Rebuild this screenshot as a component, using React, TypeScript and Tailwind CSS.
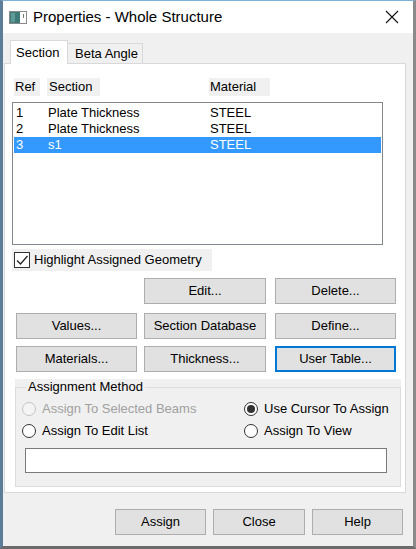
import React from "react";

const rows = [
  { ref: "1", section: "Plate Thickness", material: "STEEL" },
  { ref: "2", section: "Plate Thickness", material: "STEEL" },
  { ref: "3", section: "s1", material: "STEEL" },
];

const Btn = ({
  label,
  w = "w-[121px]",
  focused = false,
}: {
  label: string;
  w?: string;
  focused?: boolean;
}) => (
  <div
    className={`${w} h-[26px] flex items-center justify-center bg-[#e1e1e1] text-[13px] text-black ${
      focused ? "border-2 border-[#0078d7]" : "border border-[#adadad]"
    }`}
  >
    {label}
  </div>
);

const Radio = ({
  label,
  checked = false,
  disabled = false,
}: {
  label: string;
  checked?: boolean;
  disabled?: boolean;
}) => (
  <div className="flex items-center h-[16px]">
    <div
      className={`w-[14px] h-[14px] rounded-full border flex items-center justify-center ${
        disabled ? "border-[#c4c4c4] bg-[#f4f4f4]" : "border-[#333333] bg-white"
      }`}
    >
      {checked && <div className="w-[8px] h-[8px] rounded-full bg-[#333333]" />}
    </div>
    <span
      className={`ml-[6px] text-[13px] ${disabled ? "text-[#a0a0a0]" : "text-black"}`}
    >
      {label}
    </span>
  </div>
);

const App = () => {
  return (
    <div className="w-[416px] h-[549px] flex flex-col bg-[#f0f0f0] border-t border-t-[#7fb0d8] border-l-[3px] border-l-[#5d7c98] border-r-[3px] border-r-[#8a8a8a] border-b-[3px] border-b-[#6b6b6b] font-['Liberation_Sans',Arial,sans-serif] text-black leading-[16px]">
      {/* title bar */}
      <div className="h-[32px] bg-white flex items-center shrink-0">
        <svg className="ml-[6px]" width="18" height="13" viewBox="0 0 18 13">
          <rect x="0.5" y="0.5" width="17" height="12" fill="#ffffff" stroke="#8a8a8a" />
          <rect x="1" y="1" width="10" height="11" fill="#3e7a78" />
          <rect x="2" y="2" width="4" height="9" fill="#5f9c98" />
          <rect x="14" y="3" width="1" height="4" fill="#7a7a7a" />
        </svg>
        <span className="ml-[6px] text-[15px] leading-[20px] text-black">
          Properties - Whole Structure
        </span>
        <svg className="ml-auto mr-[14px]" width="14" height="14" viewBox="0 0 14 14">
          <path d="M1 1 L13 13 M13 1 L1 13" stroke="#111111" strokeWidth="1.1" />
        </svg>
      </div>

      {/* body */}
      <div className="flex flex-col pt-[7px]">
        {/* tabs */}
        <div className="flex items-end h-[24px] ml-[7px]">
          <div className="relative z-10 h-[24px] w-[58px] bg-white border border-[#d9d9d9] border-b-0 flex items-center pl-[5px] text-[13px]">
            Section
          </div>
          <div className="h-[21px] w-[75px] bg-[#f0f0f0] border border-[#d9d9d9] border-l-0 border-b-0 flex items-center pl-[7px] text-[13px]">
            Beta Angle
          </div>
        </div>

        {/* tab page */}
        <div className="-mt-[1px] ml-[1px] w-[402px] h-[430px] bg-white border border-[#d9d9d9] flex flex-col">
          {/* headers */}
          <div className="flex mt-[14px] h-[18px] text-[13px]">
            <div className="ml-[9px] w-[26px] bg-[#f0f0f0] pl-[1px] flex items-center">Ref</div>
            <div className="ml-[7px] w-[53px] bg-[#f0f0f0] pl-[2px] flex items-center">Section</div>
            <div className="ml-[109px] w-[61px] bg-[#f0f0f0] pl-[1px] flex items-center">Material</div>
          </div>

          {/* list */}
          <div className="mt-[6px] ml-[7px] w-[371px] h-[143px] border border-[#828790] bg-white pt-[2px] px-[1px]">
            {rows.map((r, i) => (
              <div
                key={i}
                className={`flex h-[16px] items-center pl-[2px] text-[13px] ${
                  i === 2 ? "bg-[#3399ff] text-white" : "text-black"
                }`}
              >
                <span className="w-[32px]">{r.ref}</span>
                <span className="w-[162px]">{r.section}</span>
                <span>{r.material}</span>
              </div>
            ))}
          </div>

          {/* checkbox */}
          <div className="mt-[4px] ml-[7px] w-[200px] h-[22px] bg-[#f0f0f0] flex items-center pl-[2px]">
            <div className="w-[16px] h-[16px] border border-[#333333] bg-white flex items-center justify-center">
              <svg width="14" height="14" viewBox="0 0 14 14">
                <path d="M2 7.5 L5.5 11 L12.5 3" fill="none" stroke="#222222" strokeWidth="1.3" />
              </svg>
            </div>
            <span className="ml-[4px] text-[13px]">Highlight Assigned Geometry</span>
          </div>

          {/* buttons */}
          <div className="flex mt-[7px] ml-[139px]">
            <Btn label="Edit..." w="w-[122px]" />
            <div className="ml-[9px]">
              <Btn label="Delete..." />
            </div>
          </div>
          <div className="flex mt-[9px] ml-[11px]">
            <Btn label="Values..." />
            <div className="ml-[7px]">
              <Btn label="Section Database" w="w-[122px]" />
            </div>
            <div className="ml-[9px]">
              <Btn label="Define..." />
            </div>
          </div>
          <div className="flex mt-[7px] ml-[11px]">
            <Btn label="Materials..." />
            <div className="ml-[7px]">
              <Btn label="Thickness..." w="w-[122px]" />
            </div>
            <div className="ml-[9px]">
              <Btn label="User Table..." focused />
            </div>
          </div>

          {/* assignment method */}
          <div className="mt-[7px] ml-[10px] w-[386px] h-[108px] bg-[#f0f0f0]">
            <fieldset className="h-full border border-[#dcdcdc] px-[6px]">
              <legend className="ml-[4px] px-[2px] text-[13px] leading-[16px]">Assignment Method</legend>
              <div className="flex mt-[6px]">
                <div className="w-[222px] flex flex-col gap-[6px]">
                  <Radio label="Assign To Selected Beams" disabled />
                  <Radio label="Assign To Edit List" />
                </div>
                <div className="flex flex-col gap-[6px]">
                  <Radio label="Use Cursor To Assign" checked />
                  <Radio label="Assign To View" />
                </div>
              </div>
              <div className="mt-[9px] ml-[3px] w-[362px] h-[25px] bg-white border border-[#7a7a7a]" />
            </fieldset>
          </div>
        </div>

        {/* bottom buttons */}
        <div className="flex justify-end gap-[7px] mt-[16px] pr-[10px]">
          <Btn label="Assign" w="w-[91px]" />
          <Btn label="Close" w="w-[92px]" />
          <Btn label="Help" w="w-[91px]" />
        </div>
      </div>
    </div>
  );
};

export default App;
